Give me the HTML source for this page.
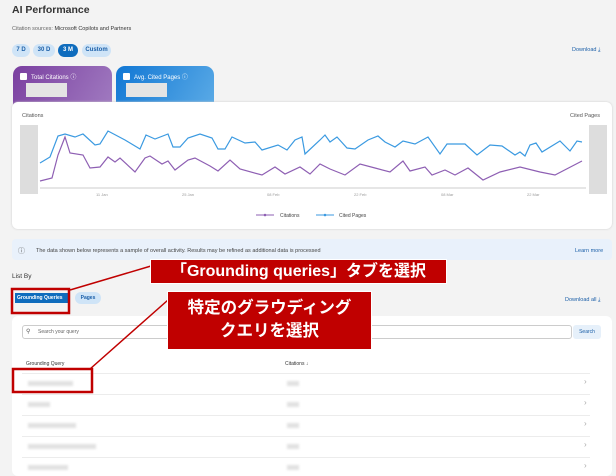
<!DOCTYPE html>
<html><head><meta charset="utf-8"><style>
*{margin:0;padding:0;box-sizing:border-box}
body{width:616px;height:468px;overflow:hidden;background:#f3f3f3;font-family:"Liberation Sans","Noto Sans CJK JP",sans-serif;color:#333;position:relative}
.a{position:absolute}
.pill{position:absolute;top:44px;height:13px;border-radius:7px;background:#cfe4f7;color:#1b5fa8;font-size:6px;font-weight:bold;line-height:13px;text-align:center}
.t{font-size:5.5px;color:#555}
.row{position:absolute;left:22px;width:568px;height:1px;background:#ececec}
.bl{position:absolute;height:5px;background:#e2e2e2;filter:blur(1px)}
.chev{position:absolute;left:584px;font-size:8px;color:#aaa}
.call{position:absolute;background:#c00000;color:#fff;font-weight:bold;text-align:center;border:1px solid #fff;white-space:nowrap}
</style></head><body>
<div class="a" style="left:12px;top:4px;font-size:10.5px;font-weight:bold;color:#333">AI Performance</div>
<div class="a" style="left:12px;top:26px;font-size:5.5px;color:#666">Citation sources: <span style="color:#333">Microsoft Copilots and Partners</span></div>
<div class="pill" style="left:12px;width:18px">7 D</div>
<div class="pill" style="left:33px;width:22px">30 D</div>
<div class="pill" style="left:58px;width:20px;background:#0f6cbd;color:#fff">3 M</div>
<div class="pill" style="left:82px;width:29px">Custom</div>
<div class="a" style="left:572px;top:47px;font-size:5.5px;color:#1b5fa8">Download ⤓</div>
<div class="a" style="left:13px;top:66px;width:99px;height:40px;border-radius:9px 9px 0 0;background:linear-gradient(120deg,#7a3fa0,#a07ac0)"></div>
<div class="a" style="left:116px;top:66px;width:98px;height:40px;border-radius:9px 9px 0 0;background:linear-gradient(120deg,#1177d4,#5aaae6)"></div>
<div class="a" style="left:20px;top:73px;width:7px;height:7px;background:#fff;border-radius:1px"></div>
<div class="a" style="left:31px;top:72px;font-size:6px;color:#fff">Total Citations ⓘ</div>
<div class="a" style="left:26px;top:83px;width:41px;height:14px;background:#e4e4e4"></div>
<div class="a" style="left:123px;top:73px;width:7px;height:7px;background:#fff;border-radius:1px"></div>
<div class="a" style="left:134px;top:72px;font-size:6px;color:#fff">Avg. Cited Pages ⓘ</div>
<div class="a" style="left:126px;top:83px;width:41px;height:14px;background:#e4e4e4"></div>
<div class="a" style="left:12px;top:102px;width:600px;height:127px;background:#fff;border-radius:6px;box-shadow:0 0 2px #ccc"></div>
<div class="a t" style="left:22px;top:113px">Citations</div>
<div class="a t" style="left:570px;top:113px">Cited Pages</div>
<div class="a" style="left:20px;top:125px;width:18px;height:69px;background:#ddd"></div>
<div class="a" style="left:589px;top:125px;width:18px;height:69px;background:#ddd"></div>
<svg class="a" style="left:0;top:0" width="616" height="240">
<line x1="40" y1="188" x2="586" y2="188" stroke="#ddd" stroke-width="1.5"/>
<polyline fill="none" stroke="#3b9ae1" stroke-width="1.2" points="40,163 50,157 58,136 65,134 75,137 83,134 95,145 100,144 108,131 125,140 140,149 146,135 155,139 168,134 173,147 180,147 188,138 200,134 212,138 218,149 225,149 232,137 245,143 255,142 262,150 278,145 287,150 295,140 302,137 305,154 320,140 325,135 330,142 337,137 347,148 355,149 368,140 378,136 385,142 395,147 403,141 415,144 428,137 440,154 447,144 465,144 477,155 490,145 502,146 515,155 520,152 525,156 530,145 536,143 542,152 560,141 570,151 577,141 582,142"/>
<polyline fill="none" stroke="#8e5fb3" stroke-width="1.2" points="40,181 52,178 58,155 65,137 70,153 83,155 90,168 100,167 108,157 115,162 120,158 135,172 145,158 150,156 162,164 168,161 175,170 188,160 195,158 210,166 218,171 230,160 240,169 262,175 275,167 285,174 300,167 310,174 320,164 330,169 345,175 360,164 375,168 390,172 403,161 410,171 425,167 432,175 445,170 455,175 468,168 483,180 500,172 520,167 540,172 555,175 582,161"/>
<g font-size="4" fill="#999" font-family="Liberation Sans"><text x="96" y="196">11 Jan</text><text x="182" y="196">25 Jan</text><text x="267" y="196">08 Feb</text><text x="354" y="196">22 Feb</text><text x="441" y="196">08 Mar</text><text x="527" y="196">22 Mar</text></g>
<line x1="256" y1="215" x2="274" y2="215" stroke="#8e5fb3"/><circle cx="265" cy="215" r="1.3" fill="#8e5fb3"/>
<line x1="316" y1="215" x2="334" y2="215" stroke="#3b9ae1"/><circle cx="325" cy="215" r="1.3" fill="#3b9ae1"/>
<text x="280" y="217" font-size="5" fill="#444" font-family="Liberation Sans">Citations</text>
<text x="339" y="217" font-size="5" fill="#444" font-family="Liberation Sans">Cited Pages</text>
</svg>
<div class="a" style="left:12px;top:239px;width:600px;height:21px;background:#e9f1fb;border-radius:4px"></div>
<div class="a" style="left:18px;top:246px;font-size:7px;color:#666">ⓘ</div>
<div class="a" style="left:36px;top:248px;font-size:5.5px;color:#444">The data shown below represents a sample of overall activity. Results may be refined as additional data is processed</div>
<div class="a" style="left:575px;top:248px;font-size:5.5px;color:#1b5fa8">Learn more</div>
<div class="a" style="left:12px;top:273px;font-size:6.5px;color:#333">List By</div>
<div class="a" style="left:15px;top:293px;width:53px;height:10px;background:#0f6cbd;color:#fff;font-size:5px;font-weight:bold;line-height:10px;padding-left:2px;white-space:nowrap;overflow:hidden">Grounding Queries</div>
<div class="pill" style="left:75px;top:292px;width:26px;height:12px;line-height:12px;font-size:5px">Pages</div>
<div class="a" style="left:565px;top:297px;font-size:5.5px;color:#1b5fa8">Download all ⤓</div>
<div class="a" style="left:12px;top:316px;width:600px;height:160px;background:#fff;border-radius:6px"></div>
<div class="a" style="left:22px;top:325px;width:550px;height:14px;border:1px solid #ccc;border-radius:3px"></div>
<div class="a" style="left:26px;top:328px;font-size:6px;color:#555">⚲</div>
<div class="a" style="left:38px;top:329px;font-size:5px;color:#666">Search your query</div>
<div class="a" style="left:573px;top:325px;width:28px;height:14px;background:#e6f0fa;border-radius:3px;font-size:5px;color:#1b5fa8;text-align:center;line-height:14px">Search</div>
<div class="a" style="left:26px;top:361px;font-size:5px;color:#333">Grounding Query</div>
<div class="a" style="left:285px;top:361px;font-size:5px;color:#333">Citations ↓</div>
<div class="row" style="top:373px"></div><div class="row" style="top:394px"></div><div class="row" style="top:415px"></div><div class="row" style="top:436px"></div><div class="row" style="top:457px"></div>
<div class="bl" style="left:28px;top:381px;width:45px"></div><div class="bl" style="left:287px;top:381px;width:12px"></div><div class="chev" style="top:377px">›</div>
<div class="bl" style="left:28px;top:402px;width:22px"></div><div class="bl" style="left:287px;top:402px;width:12px"></div><div class="chev" style="top:398px">›</div>
<div class="bl" style="left:28px;top:423px;width:48px"></div><div class="bl" style="left:287px;top:423px;width:12px"></div><div class="chev" style="top:419px">›</div>
<div class="bl" style="left:28px;top:444px;width:68px"></div><div class="bl" style="left:287px;top:444px;width:12px"></div><div class="chev" style="top:440px">›</div>
<div class="bl" style="left:28px;top:465px;width:40px"></div><div class="bl" style="left:287px;top:465px;width:12px"></div><div class="chev" style="top:461px">›</div>
<svg class="a" style="left:0;top:0" width="616" height="468">
<line x1="151" y1="266" x2="70" y2="290" stroke="#c00000" stroke-width="1.5"/>
<line x1="168" y1="300" x2="90" y2="369" stroke="#c00000" stroke-width="1.5"/>
<rect x="12" y="289" width="57" height="24" fill="none" stroke="#c00000" stroke-width="2.5"/>
<rect x="13" y="369" width="79" height="23" fill="none" stroke="#c00000" stroke-width="2.5"/>
</svg>
<div class="call" style="left:150px;top:259px;width:297px;height:25px;font-size:16px;line-height:23px">「Grounding queries」タブを選択</div>
<div class="call" style="left:167px;top:291px;width:205px;height:59px;font-size:16.5px;line-height:23px;padding-top:5px">特定のグラウディング<br>クエリを選択</div>
</body></html>
